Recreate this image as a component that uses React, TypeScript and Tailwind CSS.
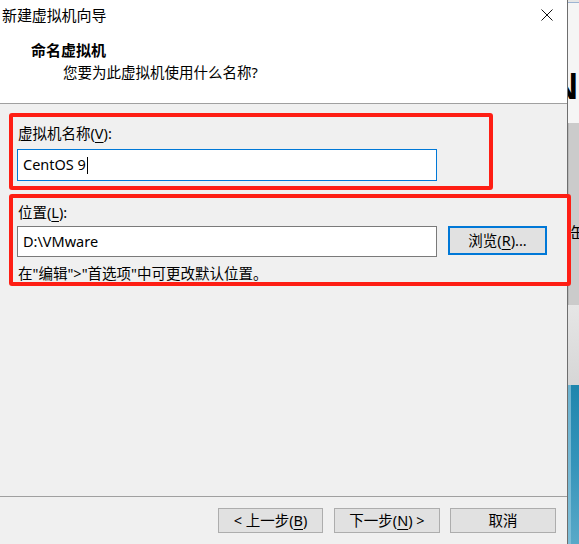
import React from 'react';

const FONT = "font-['Noto_Sans','Noto_Sans_CJK_SC',sans-serif]";

const Key = ({ k }: { k: string }) => (
  <span className="underline underline-offset-[3px] decoration-1">{k}</span>
);

const WinButton = ({ children, className = '' }: { children: React.ReactNode; className?: string }) => (
  <button
    className={`h-[25px] bg-[#e1e1e1] border border-[#adadad] text-[14.5px] leading-none text-black flex items-center justify-center ${className}`}
  >
    {children}
  </button>
);

const App = () => {
  return (
    <div className={`relative w-[579px] h-[544px] flex overflow-hidden text-black ${FONT}`}>
      {/* wizard dialog */}
      <div className="w-[567px] h-full flex flex-col bg-[#f0f0f0]">
        <div className="bg-white border-b border-[#a0a0a0]">
          {/* title bar */}
          <div className="h-[31px] flex items-center justify-between pl-[2px] pr-[14px]">
            <span className="text-[15px] leading-none tracking-[-0.1px]">新建虚拟机向导</span>
            <svg width="12" height="12" viewBox="0 0 12 12" className="mt-[-1px]">
              <path d="M0.5 0.5 L11.5 11.5 M11.5 0.5 L0.5 11.5" stroke="#111" strokeWidth="1" fill="none" />
            </svg>
          </div>
          {/* header */}
          <div className="h-[72px] pl-[31px] pt-[9px]">
            <div className="text-[15px] leading-[20px] font-bold">命名虚拟机</div>
            <div className="text-[14.5px] leading-[20px] mt-[2px] pl-[32px]">您要为此虚拟机使用什么名称?</div>
          </div>
        </div>

        {/* body */}
        <div className="flex-1 pl-[17px] pt-[19px]">
          <div className="text-[14.5px] leading-[20px] ml-px">
            虚拟机名称(<Key k="V" />):
          </div>
          <div className="mt-[6px] w-[420px] h-[32px] bg-white border border-[#0078d7] flex items-center pl-[5px] text-[14.5px]">
            <span>CentOS 9</span>
            <span className="inline-block w-px h-[17px] bg-black ml-[1px]" />
          </div>

          <div className="mt-[21px] text-[14.5px] leading-[20px] ml-px">
            位置(<Key k="L" />):
          </div>
          <div className="mt-[4px] flex items-start">
            <div className="w-[420px] h-[31px] bg-white border border-[#7a7a7a] flex items-center pl-[5px] text-[14.5px]">
              D:\VMware
            </div>
            <button className="ml-[11px] w-[99px] h-[29px] bg-[#e1e1e1] border-2 border-[#0078d7] text-[14.5px] leading-none flex items-center justify-center">
              浏览(<Key k="R" />)...
            </button>
          </div>
          <div className="mt-[6px] text-[14.5px] leading-[20px] ml-px">
            在"编辑"&gt;"首选项"中可更改默认位置。
          </div>
        </div>

        {/* footer */}
        <div className="h-[48px] border-t border-[#a0a0a0] flex justify-end items-start pt-[11px] pr-[11px]">
          <WinButton className="w-[105px]">
            &lt; 上一步(<Key k="B" />)
          </WinButton>
          <WinButton className="w-[106px] ml-[11px]">
            下一步(<Key k="N" />) &gt;
          </WinButton>
          <WinButton className="w-[106px] ml-[10px]">取消</WinButton>
        </div>
      </div>

      {/* dialog edge */}
      <div className="w-px bg-[#6e6e6e]" />

      {/* desktop behind the dialog */}
      <div className="flex-1 flex flex-col overflow-hidden">
        <div className="h-[2px] bg-[#e6e6e6]" />
        <div className="h-px bg-[#9db4d2]" />
        <div className="h-[120px] bg-[#f5f5f5] pt-[66px] overflow-hidden">
          <span className="block text-[36px] leading-none font-black ml-[-16px] font-['Liberation_Sans',sans-serif]">N</span>
        </div>
        <div className="h-[182px] bg-[#cbcbcb] border-l border-[#b8b8b8] pt-[102px] overflow-hidden">
          <span className="block text-[15px] leading-none ml-[1px] whitespace-nowrap">缶</span>
        </div>
        <div className="h-[80px] bg-gradient-to-b from-[#e6e6e6] to-[#d6d6d6]" />
        <div className="flex-1 flex">
          <div className="w-[3px] bg-gradient-to-b from-[#6fb3cf] to-[#7dbdd6]" />
          <div className="flex-1 bg-gradient-to-b from-[#1f86ad] via-[#3594ba] to-[#58a9c8]" />
        </div>
      </div>

      {/* red annotation boxes */}
      <div className="absolute left-[9px] top-[113px] w-[484px] h-[77px] border-4 border-[#fe1e14] rounded-[3px] pointer-events-none" />
      <div className="absolute left-[9px] top-[194px] w-[562px] h-[92px] border-4 border-[#fe1e14] rounded-[3px] pointer-events-none" />
    </div>
  );
};

export default App;
